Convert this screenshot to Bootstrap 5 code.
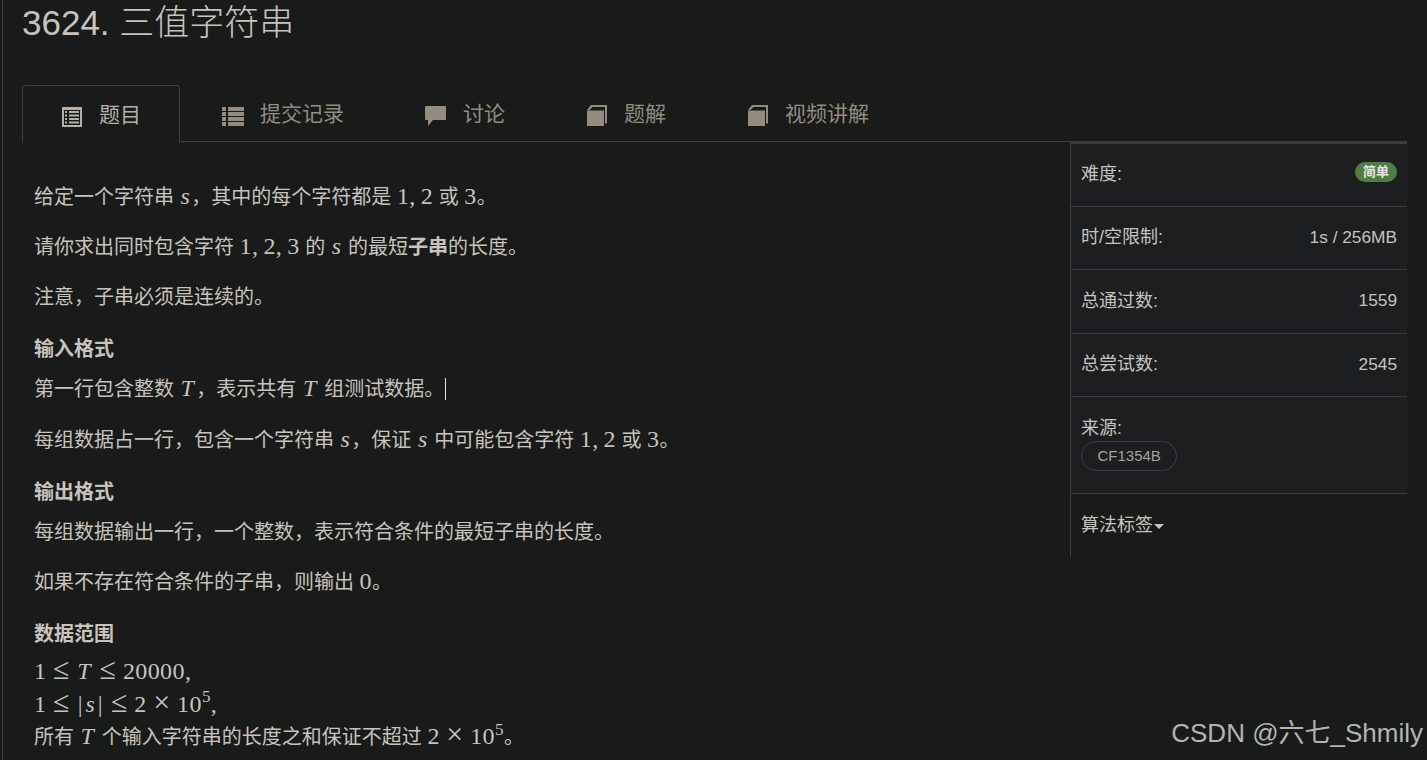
<!DOCTYPE html>
<html lang="zh">
<head>
<meta charset="utf-8">
<title>3624. 三值字符串</title>
<link href="https://cdn.jsdelivr.net/npm/bootstrap@5.3.0/dist/css/bootstrap.min.css" rel="stylesheet">
<style>
html,body{height:760px;overflow:hidden;background:#191a1a;}
body{font-family:"Liberation Sans","Noto Sans CJK SC",sans-serif;color:#c8c3bc;}
.pg{margin-left:2px;border-left:1px solid #3a3e40;padding:0 20px 0 19px;height:760px;}
.ttl{font-size:35px;font-weight:300;line-height:46px;margin:0 0 39px;color:#c8c3bc;}
.tabs-x{border-bottom:1px solid #3a3e40;height:57px;}
.tabs-x .nav-link{height:57px;border:1px solid transparent;border-bottom:0;border-radius:4px 4px 0 0;padding:0 39px;font-size:21px;color:#938c7f;gap:17px;margin:0;background:transparent;}
.tabs-x .nav-link.active{color:#b5afa5;border-color:#3a3e40;background:#191a1a;height:58px;margin-right:1px;padding-right:38px;}
.tabs-x svg{width:22px;height:30px;fill:currentColor;flex:none;overflow:visible;}
.tabs-x svg.nar{width:20px;}
.main-x{width:1048px;padding:39.5px 0 0 12px;font-size:20px;line-height:30px;}
.main-x p{margin:0 0 20.25px;}
.main-x .hd{font-weight:700;margin:0 0 10px;line-height:30px;padding-top:2px;}
.mth{font-family:"Liberation Serif",serif;font-size:24px;line-height:0;letter-spacing:.4px;}
.mth i{font-style:italic;padding:0 1px;}
.mth i.tt{padding:0 2px 0 1px;}
.mth sup{font-size:17px;top:-.55em;line-height:0;}
.cm{margin-right:5px;}
.rel{font-size:30px;margin:0 6.5px;line-height:0;}
.bar{padding:0 1.5px;}
.rng{line-height:32.5px;margin-top:-3px;}
.side-x{width:337px;border-left:1px solid #3a3e40;height:415px;font-size:18px;}
.side-x .itm{background:#1c1e20;border-bottom:1px solid #3a3e40;padding:0 10px;display:flex;justify-content:space-between;align-items:center;height:63.5px;}
.side-x .itm.fst{border-top:2px solid #3a3e40;height:64.5px;}
.side-x .vl{font-size:17.3px;}
.side-x .itm.src{display:block;height:97px;padding-top:19px;line-height:24px;}
.side-x .itm.alg{background:transparent;border:0;}
.diff{background:#4f7f3f;color:#e8e6e3;border-radius:10px;font-size:13px;line-height:20px;height:20px;padding:0 8px;font-weight:700;margin-top:-5px;align-self:center;}
.srcp{display:inline-block;border:1px solid #3a3e40;border-radius:15px;font-size:15px;line-height:28px;height:30px;padding:0 15.5px;color:#a8a297;margin-top:1px;}
.caret-x{display:inline-block;border-top:5px solid #c8c3bc;border-left:5px solid transparent;border-right:5px solid transparent;margin-left:1px;vertical-align:middle;}
.cursor-x{display:inline-block;width:1px;height:22px;background:#e8e6e3;vertical-align:-4px;margin-left:1px;}
.wm{position:absolute;right:4px;top:716px;font-size:26px;line-height:34px;color:#b4b4b4;white-space:nowrap;}
</style>
</head>
<body>
<div class="pg">
  <h1 class="ttl">3624. 三值字符串</h1>
  <ul class="nav tabs-x">
    <li class="nav-item"><a class="nav-link active d-flex align-items-center" href="#">
      <svg class="nar" viewBox="0 0 20 30"><path fill-rule="evenodd" d="M0 7h20v20H0zM2 10v15h16V10z"/><path d="M3 11h2v2H3zM7 11h10v2H7zM3 14.500h2v2H3zM7 14.500h10v2H7zM3 18h2v2H3zM7 18h10v2H7zM3 21.500h2v2H3zM7 21.500h10v2H7z"/></svg>题目</a></li>
    <li class="nav-item"><a class="nav-link d-flex align-items-center" href="#">
      <svg viewBox="0 0 22 30"><path d="M1 8h4v4H1zM7 8h16v4H7zM1 13h4v4H1zM7 13h16v4H7zM1 18h4v4H1zM7 18h16v4H7zM1 23h4v4H1zM7 23h16v4H7z"/></svg>提交记录</a></li>
    <li class="nav-item"><a class="nav-link d-flex align-items-center" href="#">
      <svg viewBox="0 0 22 30"><path d="M2 7h19a1 1 0 0 1 1 1v12a1 1 0 0 1-1 1H9l-5 6v-6H2a1 1 0 0 1-1-1V8a1 1 0 0 1 1-1z"/></svg>讨论</a></li>
    <li class="nav-item"><a class="nav-link d-flex align-items-center" href="#">
      <svg viewBox="0 0 22 30"><path d="M6 6h16v18.500h-2V8H7.500L4.500 11H2z"/><path d="M2 11.500h17V27H2z"/></svg>题解</a></li>
    <li class="nav-item"><a class="nav-link d-flex align-items-center" href="#">
      <svg viewBox="0 0 22 30"><path d="M6 6h16v18.500h-2V8H7.500L4.500 11H2z"/><path d="M2 11.500h17V27H2z"/></svg>视频讲解</a></li>
  </ul>
  <div class="d-flex">
    <div class="main-x">
      <p>给定一个字符串 <span class="mth"><i>s</i></span>，其中的每个字符都是 <span class="mth">1<span class="cm">,</span>2</span> 或 <span class="mth">3</span>。</p>
      <p>请你求出同时包含字符 <span class="mth">1<span class="cm">,</span>2<span class="cm">,</span>3</span> 的 <span class="mth"><i>s</i></span> 的最短<b>子串</b>的长度。</p>
      <p>注意，子串必须是连续的。</p>
      <div class="hd">输入格式</div>
      <p>第一行包含整数 <span class="mth"><i class="tt">T</i></span>，表示共有 <span class="mth"><i class="tt">T</i></span> 组测试数据。<span class="cursor-x"></span></p>
      <p>每组数据占一行，包含一个字符串 <span class="mth"><i>s</i></span>，保证 <span class="mth"><i>s</i></span> 中可能包含字符 <span class="mth">1<span class="cm">,</span>2</span> 或 <span class="mth">3</span>。</p>
      <div class="hd">输出格式</div>
      <p>每组数据输出一行，一个整数，表示符合条件的最短子串的长度。</p>
      <p>如果不存在符合条件的子串，则输出 <span class="mth">0</span>。</p>
      <div class="hd">数据范围</div>
      <div class="rng">
        <div><span class="mth">1<span class="rel">≤</span><i class="tt">T</i><span class="rel">≤</span>20000,</span></div>
        <div><span class="mth">1<span class="rel">≤</span><span class="bar">|</span><i>s</i><span class="bar">|</span><span class="rel">≤</span>2<span class="rel">×</span>10<sup>5</sup>,</span></div>
        <div>所有 <span class="mth"><i class="tt">T</i></span> 个输入字符串的长度之和保证不超过 <span class="mth">2<span class="rel">×</span>10<sup>5</sup></span>。</div>
      </div>
    </div>
    <aside class="side-x">
      <div class="itm fst"><span>难度:</span><span class="diff">简单</span></div>
      <div class="itm"><span>时/空限制:</span><span class="vl">1s / 256MB</span></div>
      <div class="itm"><span>总通过数:</span><span class="vl">1559</span></div>
      <div class="itm"><span>总尝试数:</span><span class="vl">2545</span></div>
      <div class="itm src"><div>来源:</div><span class="srcp">CF1354B</span></div>
      <div class="itm alg"><span>算法标签<span class="caret-x"></span></span></div>
    </aside>
  </div>
</div>
<div class="wm">CSDN @六七_Shmily</div>
<script src="https://cdn.jsdelivr.net/npm/bootstrap@5.3.0/dist/js/bootstrap.bundle.min.js"></script>
</body>
</html>
